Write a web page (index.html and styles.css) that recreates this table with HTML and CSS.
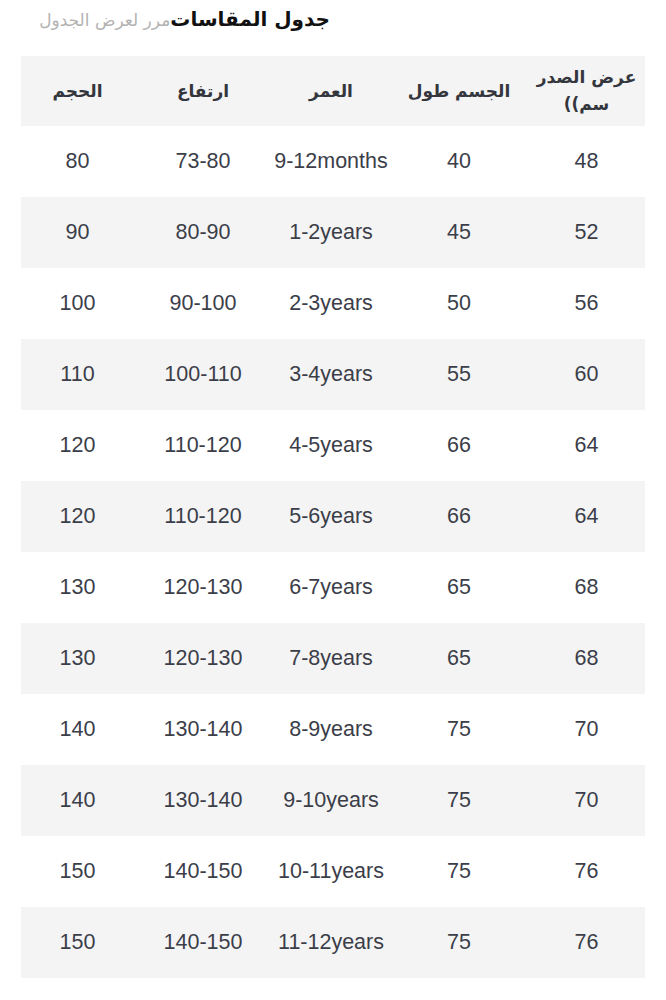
FILE: index.html
```html
<!DOCTYPE html>
<html lang="ar" dir="rtl">
<head>
<meta charset="utf-8">
<title>جدول المقاسات</title>
<link rel="stylesheet" href="styles.css">
</head>
<body>
<div class="page">
  <div class="title-row">
    <h1 class="title">جدول المقاسات</h1>
    <span class="hint">مرر لعرض الجدول</span>
  </div>
  <table class="size-table">
    <thead>
      <tr>
        <th class="c1">عرض الصدر <bdi dir="ltr">((سم</bdi></th>
        <th class="c2">الجسم طول</th>
        <th class="c3">العمر</th>
        <th class="c4">ارتفاع</th>
        <th class="c5">الحجم</th>
      </tr>
    </thead>
    <tbody>
      <tr><td>48</td><td>40</td><td>9-12months</td><td>73-80</td><td>80</td></tr>
      <tr><td>52</td><td>45</td><td>1-2years</td><td>80-90</td><td>90</td></tr>
      <tr><td>56</td><td>50</td><td>2-3years</td><td>90-100</td><td>100</td></tr>
      <tr><td>60</td><td>55</td><td>3-4years</td><td>100-110</td><td>110</td></tr>
      <tr><td>64</td><td>66</td><td>4-5years</td><td>110-120</td><td>120</td></tr>
      <tr><td>64</td><td>66</td><td>5-6years</td><td>110-120</td><td>120</td></tr>
      <tr><td>68</td><td>65</td><td>6-7years</td><td>120-130</td><td>130</td></tr>
      <tr><td>68</td><td>65</td><td>7-8years</td><td>120-130</td><td>130</td></tr>
      <tr><td>70</td><td>75</td><td>8-9years</td><td>130-140</td><td>140</td></tr>
      <tr><td>70</td><td>75</td><td>9-10years</td><td>130-140</td><td>140</td></tr>
      <tr><td>76</td><td>75</td><td>10-11years</td><td>140-150</td><td>150</td></tr>
      <tr><td>76</td><td>75</td><td>11-12years</td><td>140-150</td><td>150</td></tr>
    </tbody>
  </table>
</div>
</body>
</html>
```
FILE: styles.css
```css
html, body {
  margin: 0;
  padding: 0;
  background: #ffffff;
}

.page {
  width: 666px;
  padding: 0 21px;
  box-sizing: border-box;
}

.title-row {
  display: flex;
  align-items: baseline;
  height: 56px;
  padding-right: 315px;
  padding-top: 4px;
  box-sizing: border-box;
}

.title {
  margin: 0;
  font-family: "DejaVu Sans", sans-serif;
  font-size: 20px;
  font-weight: bold;
  color: #111;
  line-height: 30px;
}

.hint {
  font-family: "DejaVu Sans", sans-serif;
  font-size: 17px;
  color: #b3b3b3;
  white-space: nowrap;
}

.size-table {
  width: 624px;
  border-collapse: collapse;
  border-spacing: 0;
  table-layout: fixed;
}

.size-table th,
.size-table td {
  box-sizing: border-box;
  text-align: center;
  vertical-align: middle;
  padding: 0 2px;
}

.size-table th {
  height: 70px;
  font-family: "DejaVu Sans", sans-serif;
  font-size: 17px;
  font-weight: bold;
  color: #34363e;
  line-height: 27px;
}

.size-table td {
  height: 71px;
  font-family: "Liberation Sans", Arial, sans-serif;
  font-size: 21.5px;
  color: #3b3e49;
  white-space: nowrap;
}

.size-table thead tr,
.size-table tbody tr:nth-child(even) {
  background: #f4f4f4;
}

.c1 { width: 117px; }
.c2 { width: 138px; }
.c3 { width: 118px; }
.c4 { width: 138px; }
.c5 { width: 113px; }
```
